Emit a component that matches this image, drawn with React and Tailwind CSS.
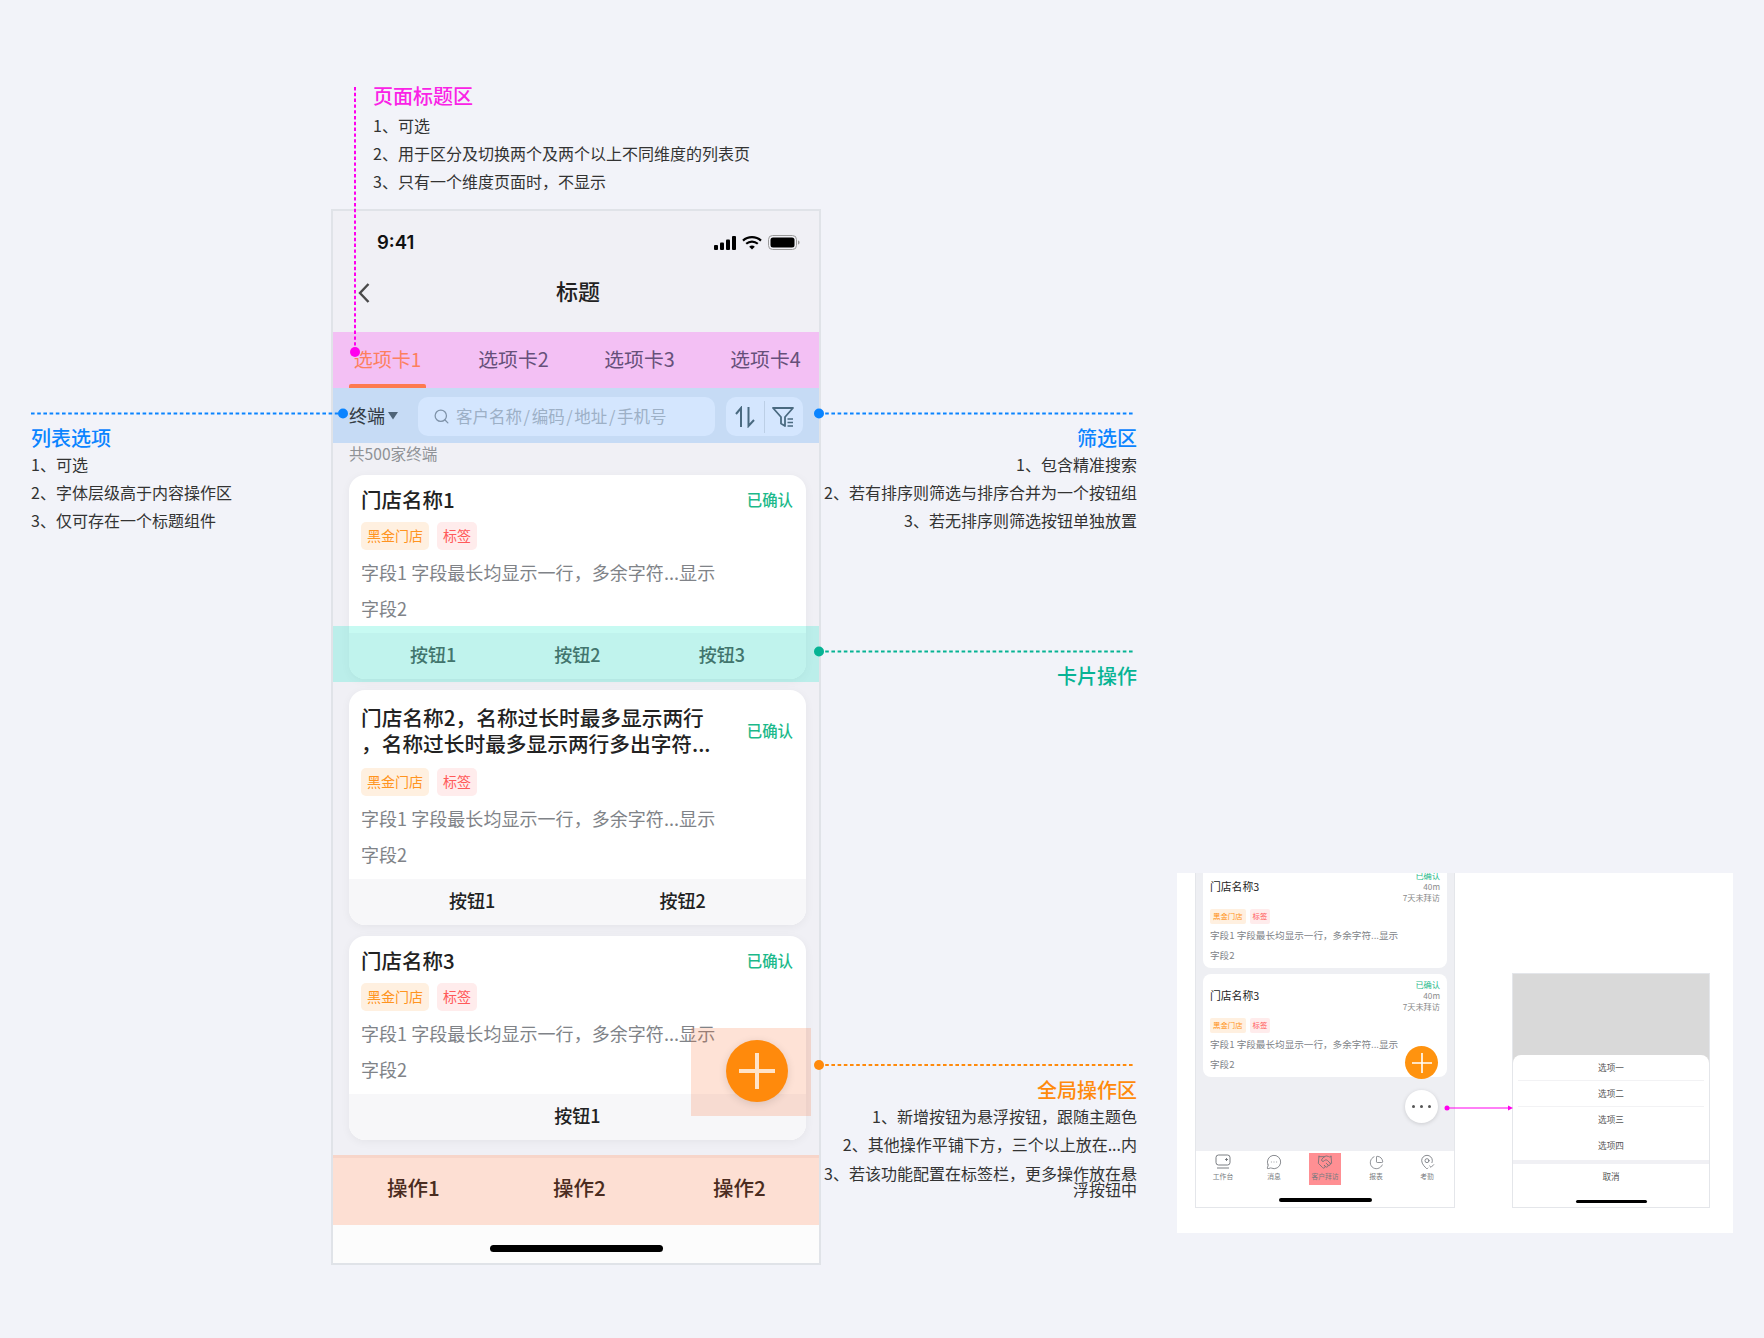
import React from "react";
import { Search, MessageCircleMore, Handshake, ChartPie, MapPinCheck } from "lucide-react";

const Note = ({ className, title, color, lines, gap }) => (
  <div className={`absolute ${className}`}>
    <div className={`text-[20px] leading-[28px] font-medium ${color} ${gap || ""}`}>{title}</div>
    {lines && lines.map((l) => (
      <div key={l} className="text-[16px] leading-[28px] text-[#333333]">{l}</div>
    ))}
  </div>
);

const Tag = ({ kind, children }) => (
  <span className={`h-[28px] px-[6px] rounded-[5px] text-[14px] leading-[26px] ${kind === "o" ? "bg-[#fff0e0] text-[#ff9420]" : "bg-[#ffecec] text-[#ff5a5a]"}`}>{children}</span>
);

const CardBody = () => (
  <>
    <div className="flex gap-[8px]">
      <Tag kind="o">黑金门店</Tag>
      <Tag kind="r">标签</Tag>
    </div>
    <div className="mt-[4px] text-[18px] leading-[36px] text-[#808388] tracking-[0.05px]">字段1 字段最长均显示一行，多余字符...显示</div>
    <div className="text-[18px] leading-[36px] text-[#808388]">字段2</div>
  </>
);

const Card = ({ title, actions, cols, two, actionText }) => (
  <div className="w-[457px] rounded-[16px] bg-white overflow-hidden shadow-[0_2px_10px_rgba(0,0,0,0.05)]">
    <div className="pl-[12px] pr-[13px] pb-[7px]">
      {two ? (
        <div className="flex items-center justify-between pt-[14px] pb-[12px]">
          <div className="text-[20.7px] leading-[26px] font-medium text-[#222222] w-[360px]">{two[0]}<br />{two[1]}</div>
          <span className="text-[15.4px] leading-[20px] text-[#1cb98a] font-medium">已确认</span>
        </div>
      ) : (
        <div className="flex items-center justify-between pt-[9px] pb-[8px]">
          <div className="text-[20.5px] leading-[30px] font-medium text-[#222222]">{title}</div>
          <span className="text-[15.4px] leading-[20px] text-[#1cb98a] font-medium">已确认</span>
        </div>
      )}
      <CardBody />
    </div>
    <div className={`h-[46px] pb-[3px] bg-[#f7f7f9] grid items-center text-center text-[18px] font-medium ${actionText || "text-[#222222]"} ${cols}`}>
      {actions.map((a) => <span key={a}>{a}</span>)}
    </div>
  </div>
);

const Signal = () => (
  <svg width="22" height="14" viewBox="0 0 22 14" fill="#000">
    <rect x="0" y="9" width="4" height="5" rx="1" />
    <rect x="6" y="6.5" width="4" height="7.5" rx="1" />
    <rect x="12" y="3.5" width="4" height="10.5" rx="1" />
    <rect x="18" y="0" width="4" height="14" rx="1" />
  </svg>
);
const Wifi = () => (
  <svg width="20" height="14" viewBox="0 0 20 14" fill="none" stroke="#000">
    <path d="M1 4.6C6 0 14 0 19 4.6" strokeWidth="2.2" />
    <path d="M4.2 7.8C7.6 4.8 12.4 4.8 15.8 7.8" strokeWidth="2.2" />
    <path d="M7.2 10.7L10 13.5L12.8 10.7C11.2 9.2 8.8 9.2 7.2 10.7Z" fill="#000" stroke="none" />
  </svg>
);
const Battery = () => (
  <svg width="32" height="15" viewBox="0 0 32 15">
    <rect x="0.5" y="0.5" width="28" height="14" rx="4" fill="none" stroke="#9a9a9a" />
    <rect x="2.5" y="2.5" width="24" height="10" rx="2.5" fill="#000" />
    <path d="M30 5.5C31 5.8 31.6 6.5 31.6 7.5C31.6 8.5 31 9.2 30 9.5Z" fill="#9a9a9a" />
  </svg>
);

const MiniCard = () => (
  <div className="w-[244px] h-[103px] rounded-[8px] bg-white pl-[7px] pr-[7px] shrink-0">
    <div className="flex justify-between h-[44px] pt-[5px]">
      <span className="text-[10.8px] leading-[16px] mt-[8px] text-[#222222]">门店名称3</span>
      <div className="text-right text-[8.2px] leading-[11px] text-[#8a8a8a]">
        <div className="text-[#1cb98a]">已确认</div>
        <div>40m</div>
        <div>7天未拜访</div>
      </div>
    </div>
    <div className="flex gap-[4px] h-[15px]">
      <span className="px-[3px] rounded-[2px] bg-[#fff0e0] text-[#ff9420] text-[7.4px] leading-[14px]">黑金门店</span>
      <span className="px-[3px] rounded-[2px] bg-[#ffecec] text-[#ff5a5a] text-[7.4px] leading-[14px]">标签</span>
    </div>
    <div className="mt-[1px] text-[9.6px] leading-[20px] text-[#808388]">字段1 字段最长均显示一行，多余字符...显示</div>
    <div className="text-[9.6px] leading-[20px] text-[#808388]">字段2</div>
  </div>
);

const NavItem = ({ label, children, active }) => (
  <div className={`w-[32px] h-[32px] flex flex-col items-center justify-start ${active ? "bg-[#ff8f93]" : ""}`}>
    <div className="h-[18px] flex items-center justify-center text-[#6b6f75]">{children}</div>
    <div className="text-[6.8px] leading-[10px] whitespace-nowrap text-[#777b80]">{label}</div>
  </div>
);

export default function App() {
  return (
    <div className="relative w-[1764px] h-[1338px] overflow-hidden bg-[#f2f3f9] font-['Noto_Sans_CJK_SC','Noto_Sans',sans-serif]">
      {/* Main phone */}
      <div className="absolute left-[331px] top-[209px] w-[490px] h-[1056px] border-2 border-[#e0e3e8] bg-[#f0f0f5] flex flex-col overflow-hidden">
        <div className="h-[63px] shrink-0 flex items-center justify-between pl-[44px] pr-[19px]">
          <span className="font-['Inter',sans-serif] text-[18.5px] font-semibold text-[#111111]">9:41</span>
          <div className="flex items-center gap-[6px]">
            <Signal />
            <Wifi />
            <Battery />
          </div>
        </div>
        <div className="h-[58px] shrink-0 relative flex items-start justify-center pl-[4px]">
          <svg className="absolute left-[25px] top-[9px]" width="12" height="20" viewBox="0 0 12 20" fill="none" stroke="#4a4a4a" strokeWidth="2.4"><path d="M10.5 1L2 10L10.5 19" /></svg>
          <span className="text-[22px] leading-[33px] font-medium text-[#222222]">标题</span>
        </div>
        <div className="h-[56px] shrink-0 bg-[#f3c0f4] flex pl-[16px] gap-[49px]">
          <div className="w-[77px] h-full flex flex-col items-center">
            <div className="flex-1 flex items-center pt-[2px] text-[19px] text-[#fd7f5f] whitespace-nowrap">选项卡1</div>
            <div className="w-full h-[4px] rounded-t-[2px] bg-[#fd7a4f]" />
          </div>
          {["选项卡2", "选项卡3", "选项卡4"].map((t) => (
            <div key={t} className="w-[77px] h-full flex items-center justify-center pb-[2px] text-[19.8px] text-[#66507a] whitespace-nowrap">{t}</div>
          ))}
        </div>
        <div className="h-[55px] shrink-0 bg-[#c6dbf5] flex items-start pt-[9px] pl-[16px]">
          <div className="w-[69px] h-[37px] flex items-center gap-[3px] text-[18px] text-[#333b44]">
            终端
            <svg width="10" height="8" viewBox="0 0 10 8" fill="#4f6478"><path d="M0 0H10L5 7.5Z" /></svg>
          </div>
          <div className="w-[297px] h-[39px] rounded-[10px] bg-[#d4e6fe] flex items-center pl-[15px] gap-[6px] text-[16.5px] text-[#9db0c6]">
            <Search size={17} strokeWidth={1.8} className="text-[#7f93a9]" />
            <span className="whitespace-nowrap pb-[1px]">客户名称<span className="px-[1.6px]">/</span>编码<span className="px-[1.6px]">/</span>地址<span className="px-[1.6px]">/</span>手机号</span>
          </div>
          <div className="ml-[11px] w-[77px] h-[39px] rounded-[10px] bg-[#d4e6fe] flex items-center">
            <div className="w-[38px] flex justify-center">
              <svg width="20" height="22" viewBox="0 0 20 22" fill="none" stroke="#4a6a80" strokeWidth="2"><path d="M6 21V2L1 8" /><path d="M13.5 1V20L19 14" /></svg>
            </div>
            <div className="w-px h-[32px] bg-[#bccfe6]" />
            <div className="flex-1 flex justify-center pr-[2px]">
              <svg width="22" height="22" viewBox="0 0 22 22" fill="none" stroke="#4a6a80" strokeWidth="1.8"><path d="M1 2H21L13 11V20L9 17.5V11Z" strokeLinejoin="round" /><path d="M15.5 13H21M15.5 16.5H21M15.5 20H21" strokeWidth="1.5" /></svg>
            </div>
          </div>
        </div>
        <div className="h-[24px] shrink-0 mb-[8px] pl-[16px] text-[15.6px] leading-[20px] text-[#8f9296]">共500家终端</div>
        <div className="pl-[16px] flex flex-col gap-[11px]">
          <Card title="门店名称1" actions={["按钮1", "按钮2", "按钮3"]} cols="grid-cols-3 px-[12px]" actionText="text-[#555555]" />
          <Card two={["门店名称2，名称过长时最多显示两行", "，名称过长时最多显示两行多出字符..."]} actions={["按钮1", "按钮2"]} cols="grid-cols-2 px-[18px]" />
          <Card title="门店名称3" actions={["按钮1"]} cols="grid-cols-1" />
        </div>
        <div className="mt-[15px] h-[70px] shrink-0 pb-[9px] bg-[#fddfd3] border-t-[3px] border-[#f7d5c9] flex items-center pl-[54px] text-[20.5px] font-medium text-[#4a2c20]">
          <span className="w-[166px]">操作1</span>
          <span className="w-[160px]">操作2</span>
          <span>操作2</span>
        </div>
        <div className="flex-1 bg-[#fcfcfc] flex justify-center pt-[20px]">
          <div className="w-[173px] h-[7px] rounded-full bg-black" />
        </div>
      </div>

      {/* Overlays on main phone */}
      <div className="absolute left-[333px] top-[626px] w-[486px] h-[56px] bg-[#00e6c4]/[0.22]" />
      <div className="absolute left-[691px] top-[1028px] w-[120px] h-[88px] bg-[#fa6e32]/[0.2]" />
      <div className="absolute left-[726px] top-[1040px] w-[62px] h-[62px] rounded-full bg-[#ff8a0c] shadow-[0_2px_8px_rgba(0,0,0,0.12)] flex items-center justify-center">
        <svg width="36" height="36" viewBox="0 0 36 36" stroke="#ffe3c8" strokeWidth="4"><path d="M18 0V36M0 18H36" /></svg>
      </div>

      {/* Annotations */}
      <Note className="left-[373px] top-[82px]" title="页面标题区" color="text-[#fa22e6]" gap="mb-[0.5px]" lines={["1、可选", "2、用于区分及切换两个及两个以上不同维度的列表页", "3、只有一个维度页面时，不显示"]} />
      <Note className="left-[31px] top-[424px]" title="列表选项" color="text-[#0a84ff]" gap="-mb-[2px]" lines={["1、可选", "2、字体层级高于内容操作区", "3、仅可存在一个标题组件"]} />
      <Note className="right-[627px] top-[424px] text-right" title="筛选区" color="text-[#0a84ff]" gap="-mb-[2px]" lines={["1、包含精准搜索", "2、若有排序则筛选与排序合并为一个按钮组", "3、若无排序则筛选按钮单独放置"]} />
      <Note className="right-[627px] top-[662px] text-right" title="卡片操作" color="text-[#07b394]" />
      <div className="absolute right-[627px] top-[1076px] w-[316px] text-right">
        <div className="text-[20px] leading-[28px] font-medium text-[#ff8a0c] -mb-[2px]">全局操作区</div>
        <div className="text-[16px] leading-[28px] text-[#333333]">1、新增按钮为悬浮按钮，跟随主题色</div>
        <div className="text-[16px] leading-[29px] text-[#333333]">2、其他操作平铺下方，三个以上放在...内</div>
        <div className="text-[16px] leading-[16px] mt-[6px] text-[#333333]">3、若该功能配置在标签栏，更多操作放在悬浮按钮中</div>
      </div>

      {/* White panel with mini screens */}
      <div className="absolute left-[1177px] top-[873px] w-[556px] h-[360px] bg-white flex pl-[18px] pr-[23px]">
        <div className="relative w-[260px] h-[335px] bg-[#eeeff3] border-x border-b border-[#e4e6ea] flex flex-col overflow-hidden">
          <div className="flex flex-col items-center gap-[6px] -mt-[8px] h-[286px]">
            <MiniCard />
            <MiniCard />
          </div>
          <div className="flex-1 bg-white flex flex-col items-center">
            <div className="flex justify-between w-[236px] pt-[2px]">
              <NavItem label="工作台">
                <svg width="16" height="16" viewBox="0 0 16 16" fill="none" stroke="#6b6f75" strokeWidth="0.9"><rect x="1" y="1" width="14" height="10" rx="2.5" /><path d="M2 14H14M10 5.5H13M11.5 4V7" /></svg>
              </NavItem>
              <NavItem label="消息"><MessageCircleMore size={16} strokeWidth={1.2} /></NavItem>
              <NavItem label="客户拜访" active><Handshake size={16} strokeWidth={1.2} /></NavItem>
              <NavItem label="报表"><ChartPie size={15} strokeWidth={1.2} /></NavItem>
              <NavItem label="考勤"><MapPinCheck size={16} strokeWidth={1.2} /></NavItem>
            </div>
            <div className="mt-[13px] w-[93px] h-[4px] rounded-full bg-black" />
          </div>
          <div className="absolute left-[209px] top-[173px] w-[33px] h-[33px] rounded-full bg-[#ff930f] flex items-center justify-center">
            <svg width="20" height="20" viewBox="0 0 20 20" stroke="#ffffff" strokeWidth="1.6"><path d="M10 0V20M0 10H20" /></svg>
          </div>
          <div className="absolute left-[209px] top-[217px] w-[33px] h-[33px] rounded-full bg-white shadow-[0_1px_4px_rgba(0,0,0,0.15)] flex items-center justify-center gap-[5px]">
            <span className="w-[3px] h-[3px] rounded-full bg-[#555555]" />
            <span className="w-[3px] h-[3px] rounded-full bg-[#555555]" />
            <span className="w-[3px] h-[3px] rounded-full bg-[#555555]" />
          </div>
        </div>
        <div className="ml-[57px] mt-[100px] w-[198px] h-[235px] bg-[#d9d9d9] border border-[#e4e6ea] flex flex-col">
          <div className="h-[81px] shrink-0" />
          <div className="rounded-t-[8px] bg-white h-[105px] flex flex-col items-center text-[8.6px] text-[#555555]">
            {["选项一", "选项二", "选项三", "选项四"].map((t, i) => (
              <div key={t} className={`w-[186px] h-[26px] pb-[1px] flex items-center justify-center ${i < 2 ? "border-b border-[#f2f2f4]" : ""}`}>{t}</div>
            ))}
          </div>
          <div className="h-[4px] bg-[#f0f0f4]" />
          <div className="flex-1 bg-white flex flex-col items-center text-[8.6px] text-[#555555]">
            <div className="h-[24px] flex items-center">取消</div>
            <div className="mt-[12px] w-[71px] h-[3px] rounded-full bg-black" />
          </div>
        </div>
      </div>

      {/* Leader lines */}
      <svg className="absolute left-0 top-0 pointer-events-none" width="1764" height="1338" viewBox="0 0 1764 1338" fill="none">
        <path d="M355 87V350" stroke="#ff00ee" strokeWidth="2" strokeDasharray="3.4 2.4" />
        <circle cx="355" cy="352" r="5" fill="#ff00ee" />
        <path d="M31 413.5H343" stroke="#0a84ff" strokeWidth="2" strokeDasharray="3.6 2.6" />
        <circle cx="343" cy="413.5" r="5" fill="#0a84ff" />
        <path d="M819 413.5H1133" stroke="#0a84ff" strokeWidth="2" strokeDasharray="3.6 2.6" />
        <circle cx="819" cy="413.5" r="5" fill="#0a84ff" />
        <path d="M819 651.5H1133" stroke="#07b394" strokeWidth="2" strokeDasharray="3.6 2.6" />
        <circle cx="819" cy="651.5" r="5" fill="#07b394" />
        <path d="M819 1065H1133" stroke="#ff8a0c" strokeWidth="2" strokeDasharray="3.6 2.6" />
        <circle cx="819" cy="1065" r="5" fill="#ff8a0c" />
        <path d="M1447 1108H1509" stroke="#ff00ee" strokeWidth="1" />
        <circle cx="1447" cy="1108" r="2.5" fill="#ff00ee" />
        <path d="M1508 1105.5L1513 1108L1508 1110.5Z" fill="#ff00ee" />
      </svg>
    </div>
  );
}
